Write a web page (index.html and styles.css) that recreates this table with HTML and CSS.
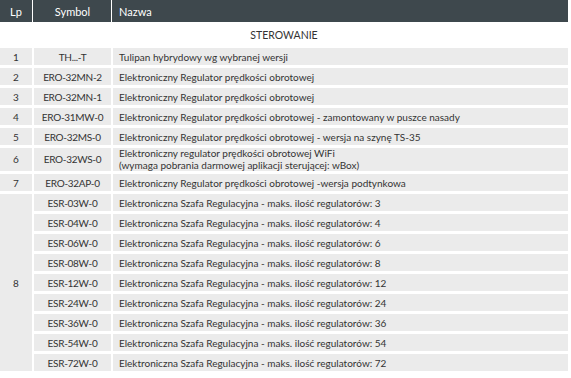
FILE: index.html
```html
<!DOCTYPE html>
<html lang="pl">
<head>
    <meta charset="UTF-8">
    <meta name="viewport" content="width=device-width, initial-scale=1.0">
    <title>Sterowanie</title>
    <link rel="stylesheet" href="styles.css">
</head>
<body>
    <table class="spec-table">
        <thead>
            <tr>
                <th class="col-lp">Lp</th>
                <th class="col-symbol">Symbol</th>
                <th class="col-name">Nazwa</th>
            </tr>
        </thead>
        <tbody>
            <tr class="section-row">
                <td colspan="3">STEROWANIE</td>
            </tr>
            <tr>
                <td class="col-lp">1</td>
                <td class="col-symbol">TH...-T</td>
                <td class="col-name">Tulipan hybrydowy wg wybranej wersji</td>
            </tr>
            <tr>
                <td class="col-lp">2</td>
                <td class="col-symbol">ERO-32MN-2</td>
                <td class="col-name">Elektroniczny Regulator prędkości obrotowej</td>
            </tr>
            <tr>
                <td class="col-lp">3</td>
                <td class="col-symbol">ERO-32MN-1</td>
                <td class="col-name">Elektroniczny Regulator prędkości obrotowej</td>
            </tr>
            <tr>
                <td class="col-lp">4</td>
                <td class="col-symbol">ERO-31MW-0</td>
                <td class="col-name">Elektroniczny Regulator prędkości obrotowej - zamontowany w puszce nasady</td>
            </tr>
            <tr>
                <td class="col-lp">5</td>
                <td class="col-symbol">ERO-32MS-0</td>
                <td class="col-name">Elektroniczny Regulator prędkości obrotowej - wersja na szynę TS-35</td>
            </tr>
            <tr class="double-row">
                <td class="col-lp">6</td>
                <td class="col-symbol">ERO-32WS-0</td>
                <td class="col-name">Elektroniczny regulator prędkości obrotowej WiFi<br>(wymaga pobrania darmowej aplikacji sterującej: wBox)</td>
            </tr>
            <tr>
                <td class="col-lp">7</td>
                <td class="col-symbol">ERO-32AP-0</td>
                <td class="col-name">Elektroniczny Regulator prędkości obrotowej -wersja podtynkowa</td>
            </tr>
            <tr>
                <td class="col-lp" rowspan="9">8</td>
                <td class="col-symbol">ESR-03W-0</td>
                <td class="col-name">Elektroniczna Szafa Regulacyjna - maks. ilość regulatorów: 3</td>
            </tr>
            <tr>
                <td class="col-symbol">ESR-04W-0</td>
                <td class="col-name">Elektroniczna Szafa Regulacyjna - maks. ilość regulatorów: 4</td>
            </tr>
            <tr>
                <td class="col-symbol">ESR-06W-0</td>
                <td class="col-name">Elektroniczna Szafa Regulacyjna - maks. ilość regulatorów: 6</td>
            </tr>
            <tr>
                <td class="col-symbol">ESR-08W-0</td>
                <td class="col-name">Elektroniczna Szafa Regulacyjna - maks. ilość regulatorów: 8</td>
            </tr>
            <tr>
                <td class="col-symbol">ESR-12W-0</td>
                <td class="col-name">Elektroniczna Szafa Regulacyjna - maks. ilość regulatorów: 12</td>
            </tr>
            <tr>
                <td class="col-symbol">ESR-24W-0</td>
                <td class="col-name">Elektroniczna Szafa Regulacyjna - maks. ilość regulatorów: 24</td>
            </tr>
            <tr>
                <td class="col-symbol">ESR-36W-0</td>
                <td class="col-name">Elektroniczna Szafa Regulacyjna - maks. ilość regulatorów: 36</td>
            </tr>
            <tr>
                <td class="col-symbol">ESR-54W-0</td>
                <td class="col-name">Elektroniczna Szafa Regulacyjna - maks. ilość regulatorów: 54</td>
            </tr>
            <tr>
                <td class="col-symbol">ESR-72W-0</td>
                <td class="col-name">Elektroniczna Szafa Regulacyjna - maks. ilość regulatorów: 72</td>
            </tr>
        </tbody>
    </table>
</body>
</html>
```

FILE: styles.css
```css
body {
    margin: 0;
    background-color: #ffffff;
    font-family: "Lato", "Open Sans", sans-serif;
    font-size: 10px;
    color: #333333;
}

.spec-table {
    width: 572px; /* 568 visible + spacing eaten by the negative margins */
    margin: -3px 0 0 -2px;
    border-collapse: separate;
    border-spacing: 2px 3px; /* white lines between the cells */
    table-layout: fixed;
}

th {
    height: 22px;
    padding: 0;
    background-color: #3e484d;
    color: #ffffff;
    font-size: 11px;
    font-weight: normal;
}

/* only a thin line between header cells */
th + th {
    box-shadow: -1px 0 0 #3e484d;
}

td {
    height: 17px;
    padding: 0;
    background-color: #ebebeb;
    line-height: 12px;
    vertical-align: middle;
}

.col-lp {
    width: 32px;
    text-align: center;
}

.col-symbol {
    width: 77px;
    text-align: center;
}

td.col-symbol {
    letter-spacing: -0.3px;
}

.col-name {
    padding-left: 6px;
    text-align: left;
}

.section-row td {
    height: 20px;
    background-color: #ffffff;
    text-align: center;
    font-size: 10.5px;
}

.double-row td {
    height: 23px;
    line-height: 11.5px;
}
```
